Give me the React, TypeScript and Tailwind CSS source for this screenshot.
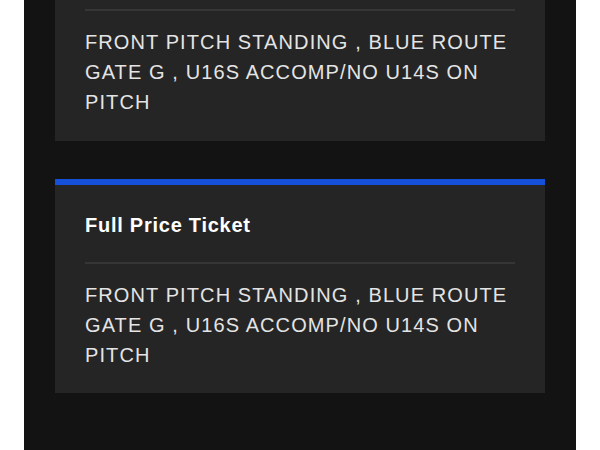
const info = "FRONT PITCH STANDING , BLUE ROUTE GATE G , U16S ACCOMP/NO U14S ON PITCH";

const Divider = () => <div className="h-[2px] bg-[#363636]" />;

const Info = ({ text }: { text: string }) => (
  <p className="text-[20px] leading-[30px] tracking-[1.1px] text-[#e4e4e4]">{text}</p>
);

// Card scrolled past its header: only the divider and details are left in view
const ContinuedCard = ({ text }: { text: string }) => (
  <div className="bg-[#252525] px-[30px] pt-[9px] pb-[24px]">
    <Divider />
    <div className="mt-[16px]">
      <Info text={text} />
    </div>
  </div>
);

const TicketCard = ({ title, text }: { title: string; text: string }) => (
  <div className="bg-[#252525]">
    <div className="h-[6px] bg-[#1450d8]" />
    <div className="px-[30px] pt-[26px] pb-[23px]">
      <h3 className="text-[20px] leading-[28px] font-bold tracking-[0.75px] text-white">{title}</h3>
      <div className="mt-[23px]">
        <Divider />
      </div>
      <div className="mt-[16px]">
        <Info text={text} />
      </div>
    </div>
  </div>
);

const App = () => {
  return (
    <div
      className="w-[600px] h-[450px] overflow-hidden bg-white px-[24px]"
      style={{ fontFamily: '"Liberation Sans", Arial, sans-serif' }}
    >
      <div className="h-full bg-[#131313] px-[31px] flex flex-col gap-[38px]">
        <ContinuedCard text={info} />
        <TicketCard title="Full Price Ticket" text={info} />
      </div>
    </div>
  );
};

export default App;
